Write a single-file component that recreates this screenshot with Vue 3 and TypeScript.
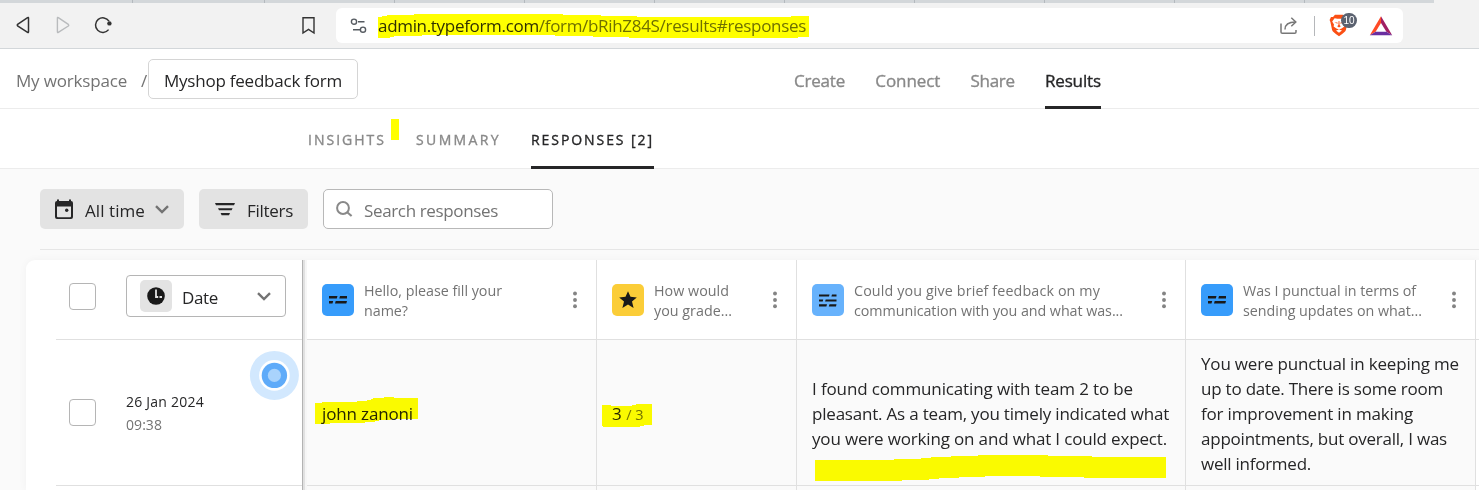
<script setup lang="ts">
import type { Directive } from 'vue'

interface Line {
  text: string
  width: number
}

interface Column {
  kind: 'short' | 'rating' | 'long'
  title: Line[]
  answer: Line[]
}

// Spreads the letters of a line over the given width.
const vFit: Directive<HTMLElement, number> = {
  mounted(el, { value }) {
    const count = el.textContent?.trim().length ?? 0
    if (count > 1) {
      const natural = el.getBoundingClientRect().width
      el.style.letterSpacing = `${(value - natural) / count}px`
    }
  },
}

const tabs = Array.from({ length: 11 }, (_, i) => i)

const columns: Column[] = [
  {
    kind: 'short',
    title: [
      { text: 'Hello, please fill your', width: 138 },
      { text: 'name?', width: 44 },
    ],
    answer: [{ text: 'john zanoni', width: 91 }],
  },
  {
    kind: 'rating',
    title: [
      { text: 'How would', width: 75 },
      { text: 'you grade...', width: 78 },
    ],
    answer: [],
  },
  {
    kind: 'long',
    title: [
      { text: 'Could you give brief feedback on my', width: 246 },
      { text: 'communication with you and what was...', width: 269 },
    ],
    answer: [
      { text: 'I found communicating with team 2 to be', width: 321 },
      { text: 'pleasant. As a team, you timely indicated what', width: 357 },
      { text: 'you were working on and what I could expect.', width: 355 },
    ],
  },
  {
    kind: 'short',
    title: [
      { text: 'Was I punctual in terms of', width: 173 },
      { text: 'sending updates on what...', width: 179 },
    ],
    answer: [
      { text: 'You were punctual in keeping me', width: 258 },
      { text: 'up to date. There is some room', width: 242 },
      { text: 'for improvement in making', width: 212 },
      { text: 'appointments, but overall, I was', width: 246 },
      { text: 'well informed.', width: 110 },
    ],
  },
]
</script>

<template>
  <div class="page">
    <div class="strip"><i v-for="t in tabs" :key="t"></i></div>

    <div class="toolbar">
      <svg class="ti" width="20" height="21" viewBox="0 0 20 21"><path d="M14.6 2.6 Q15.5 2 15.5 3.2 V16.8 Q15.5 18 14.6 17.4 L4.6 11 Q3.8 10.2 4.6 9.4 Z" fill="none" stroke="#333" stroke-width="1.5" /></svg>
      <svg class="ti" width="20" height="21" viewBox="0 0 20 21"><path d="M5.3 2.6 Q4.4 2 4.4 3.2 V16.8 Q4.4 18 5.3 17.4 L15.3 11 Q16.2 10.2 15.3 9.4 Z" fill="none" stroke="#b9bbbd" stroke-width="1.4" /></svg>
      <svg class="ti" width="20" height="21" viewBox="0 0 20 21"><path d="M15.6 14.6 A7.3 7.3 0 1 1 16 6.2" fill="none" stroke="#333" stroke-width="1.5" /><circle cx="16.4" cy="8.4" r="2.2" fill="#333" /></svg>
      <svg class="ti bookmark" width="20" height="21" viewBox="0 0 20 21"><path d="M5 2.7 H16 V18 L10.5 14.4 L5 18 Z" fill="none" stroke="#333" stroke-width="1.4" /></svg>
      <div class="address">
        <svg class="tune" width="18" height="18" viewBox="0 0 18 18"><g fill="none" stroke="#555a60" stroke-width="1.4"><circle cx="4" cy="4.7" r="2.6" /><path d="M8 4.7 H14.5 M3 12.7 H10" /><circle cx="13" cy="12.7" r="2.6" /></g></svg>
        <span v-fit="428" class="url"><b>admin.typeform.com</b>/form/bRihZ84S/results#responses</span>
        <svg class="share" width="20" height="20" viewBox="0 0 20 20"><g fill="none" stroke="#777" stroke-width="1.5"><path d="M2 7.5 V16 Q2 17.3 3.3 17.3 H15.7 Q17 17.3 17 16 V14" /><path d="M6 13.5 C6 8.5 9 6 16.5 6" /><path d="M12.3 1.8 L16.8 6 L12.3 10.2" /></g></svg>
        <i class="sep"></i>
        <div class="brave">
          <svg width="20" height="23" viewBox="0 0 20 23">
            <path d="M6 .8 H14 L16 3 L18 3 L19.4 6 L18.6 8 L16.9 16 Q16.4 18 10 22.2 Q3.6 18 3.1 16 L1.4 8 L.6 6 L2 3 L4 3 Z" fill="#fb4f14" />
            <path d="M5.6 4.2 L8.4 4.8 H11.6 L14.4 4.2 L16.8 7.6 L15 10.4 L15.4 12.6 L12.6 14.6 L10 15.4 L7.4 14.6 L4.6 12.6 L5 10.4 L3.2 7.6 Z M7 16.4 L10 15.6 L13 16.4 L10 18.8 Z" fill="#fff" />
            <path d="M5.4 8 L8.8 8.7 L8.3 9.7 Z M14.6 8 L11.2 8.7 L11.7 9.7 Z M9.6 7 H10.4 L10.6 11 L11.8 12.3 L10 13.4 L8.2 12.3 L9.4 11 Z" fill="#fb4f14" />
          </svg>
          <span class="count">10</span>
        </div>
        <svg class="bat" width="24" height="20" viewBox="0 0 24 20"><path d="M12 .3 L.8 19.2 L6.6 15.8 L12 7 Z" fill="#ff4a26" /><path d="M12 .3 L23.2 19.2 L17.4 15.8 L12 7 Z" fill="#a01f64" /><path d="M.8 19.2 H23.2 L17.4 15.8 H6.6 Z" fill="#6a2fa0" /></svg>
      </div>
    </div>

    <header class="head">
      <div class="workspace"><span v-fit="111">My workspace</span></div>
      <span class="slash">/</span>
      <div class="form-name"><span v-fit="178">Myshop feedback form</span></div>
      <nav class="nav">
        <a><span v-fit="51">Create</span></a>
        <a><span v-fit="65">Connect</span></a>
        <a><span v-fit="44">Share</span></a>
        <a class="on"><span v-fit="56">Results</span></a>
      </nav>
    </header>

    <nav class="sub">
      <a><span v-fit="78">INSIGHTS</span></a>
      <a><span v-fit="85">SUMMARY</span></a>
      <a class="on"><span v-fit="123">RESPONSES [2]</span></a>
    </nav>

    <main class="content">
      <div class="filters">
        <div class="btn time">
          <svg width="18" height="20" viewBox="0 0 18 20"><path fill-rule="evenodd" d="M2 .5 H4 V2 H14 V.5 H16 V2 Q18 2 18 4 V18 Q18 20 16 20 H2 Q0 20 0 18 V4 Q0 2 2 2 Z M2 7.5 V17.3 Q2 18.2 2.9 18.2 H15.1 Q16 18.2 16 17.3 V7.5 Z" fill="#262627" /><circle cx="11.7" cy="11.2" r="1.7" fill="#262627" /></svg>
          <div class="label"><span v-fit="60">All time</span></div>
          <svg width="14" height="9" viewBox="0 0 14 9"><path d="M1 1.2 L7 7 L13 1.2" fill="none" stroke="#737373" stroke-width="2.4" /></svg>
        </div>
        <div class="btn filter">
          <svg width="20" height="13" viewBox="0 0 20 13"><path d="M0 0 H20 L19 2.2 H1 Z M3 5.2 H17.6 L16.6 7.3 H4 Z M5.6 10 H15 L14 12.2 H6.6 Z" fill="#262627" /></svg>
          <div class="label"><span v-fit="46">Filters</span></div>
        </div>
        <div class="search">
          <svg width="17" height="17" viewBox="0 0 17 17"><circle cx="7" cy="7" r="5.9" fill="none" stroke="#898989" stroke-width="2" /><path d="M11.2 11.2 L15.6 15" stroke="#898989" stroke-width="2.1" /></svg>
          <div class="label"><span v-fit="134">Search responses</span></div>
        </div>
      </div>

      <div class="table">
        <div class="frozen">
          <div class="fh">
            <i class="box"></i>
            <div class="date">
              <i class="clock"><svg width="18" height="18" viewBox="0 0 18 18"><circle cx="9" cy="9" r="8.8" fill="#191919" /><path d="M9 2.5 V10 H11.2 M12.5 10 H15" fill="none" stroke="#e3e3e3" stroke-width="1.8" /></svg></i>
              <div class="date-label"><span v-fit="36">Date</span></div>
              <svg width="14" height="9" viewBox="0 0 14 9"><path d="M1 1.2 L7 7 L13 1.2" fill="none" stroke="#737373" stroke-width="2.4" /></svg>
            </div>
          </div>
          <div class="fr">
            <i class="box"></i>
            <div class="when">
              <div><span v-fit="78">26 Jan 2024</span></div>
              <div class="clocktime"><span v-fit="36">09:38</span></div>
            </div>
            <svg class="beacon" width="50" height="50" viewBox="0 0 50 50"><circle cx="25.4" cy="25.4" r="24.5" fill="#d2e8fe" /><circle cx="25.4" cy="25.4" r="15.3" fill="#fff" /><circle cx="25.4" cy="25.4" r="12.7" fill="#5fabf9" /><circle cx="25.4" cy="25.4" r="6.6" fill="#a9d3fc" /></svg>
          </div>
        </div>
        <div class="edge"></div>
        <div class="grid">
          <div v-for="(c, i) in columns" :key="'h' + i" class="th">
            <i class="kind" :class="c.kind">
              <svg v-if="c.kind === 'short'" width="18" height="8" viewBox="0 0 18 8"><path d="M0 0 H8.5 L7.8 2.6 H0 Z M11 0 H18 V2.6 H10.3 Z M0 5 H4.2 L3.5 7.6 H0 Z M6.7 5 H18 L17.3 7.6 H6 Z" fill="#191919" /></svg>
              <svg v-else-if="c.kind === 'long'" width="18" height="13" viewBox="0 0 18 13"><path d="M0 .5 H10.5 L10 2.6 H0 Z M13 .5 H17.5 V2.6 H12.4 Z M0 5.5 H4.2 L3.7 7.6 H0 Z M6.7 5.5 H17.5 V7.6 H6.1 Z M0 10.3 H8 L7.4 12.4 H0 Z M10.5 10.3 H17.5 L17 12.4 H9.8 Z" fill="#191919" /></svg>
              <svg v-else width="18" height="18" viewBox="0 0 18 18"><path d="M9 .2 L11.5 5.8 L17.8 6.4 L13 10.6 L14.6 17 L9 13.6 L3.4 17 L5 10.6 L.2 6.4 L6.5 5.8 Z" fill="#191919" /></svg>
            </i>
            <div class="title">
              <div v-for="l in c.title" :key="l.text"><span v-fit="l.width">{{ l.text }}</span></div>
            </div>
            <svg class="dots" width="4" height="18" viewBox="0 0 4 18"><g fill="#848484"><circle cx="2" cy="2.5" r="1.95" /><circle cx="2" cy="9" r="1.95" /><circle cx="2" cy="15.3" r="1.95" /></g></svg>
          </div>
          <div class="rest"></div>
          <div v-for="(c, i) in columns" :key="'a' + i" class="td">
            <div>
              <div v-for="l in c.answer" :key="l.text"><span v-fit="l.width">{{ l.text }}</span></div>
              <div v-if="c.kind === 'rating'" class="grade">3 <small>/ 3</small></div>
            </div>
          </div>
          <div class="rest"></div>
          <div v-for="(c, i) in columns" :key="'n' + i" class="next"></div>
        </div>
      </div>
    </main>

    <svg class="marker" width="1479" height="490" viewBox="0 0 1479 490">
      <g fill="#ff0" shape-rendering="crispEdges">
        <path d="M378 17 H382 V16 H387 V15 H414 V14 H563 V15 H601 V16 H637 V17 H791 V16 H809 V37 H798 V38 H629 V37 H593 V36 H555 V35 H422 V36 H394 V37 H390 V38 H378 Z" />
        <path d="M391 119 H399 V140 H391 Z" />
        <path d="M315 403 H322 V402 H357 V401 H367 V400 H371 V399 H373 V398 H384 V397 H394 V398 H418 V419 H391 V420 H379 V421 H375 V422 H365 V423 H330 V424 H315 Z" />
        <path d="M602 405 H611 V406 H632 V405 H636 V404 H652 V425 H644 V426 H640 V427 H603 V426 H602 Z" />
        <path d="M815 460 H894 V459 H921 V458 H931 V457 H951 V456 H978 V455 H1048 V456 H1092 V457 H1166 V478 H1084 V477 H1040 V476 H985 V477 H959 V478 H939 V479 H929 V480 H902 V481 H815 Z" />
      </g>
    </svg>
  </div>
</template>

<style>
body {
  margin: 0;
  overflow: hidden;
}
</style>

<style scoped>
.page {
  position: relative;
  width: 1479px;
  height: 490px;
  overflow: hidden;
  background: #fff;
  color: #262627;
  font-family: 'Open Sans', 'Noto Sans', sans-serif;
  font-size: 17px;
  line-height: 25px;
  white-space: nowrap;
}
.page * {
  box-sizing: border-box;
}
svg {
  display: block;
  flex: none;
}
i {
  display: block;
  flex: none;
}
.strip {
  display: flex;
  height: 3px;
  background: #f2f2f2;
}
.strip i {
  width: 130px;
  background: #d3d7da;
  border-right: 1px solid #b4b9be;
}
.strip i:first-child {
  width: 133px;
}
.strip i:nth-child(2) {
  width: 132px;
}
.strip i:last-child {
  width: 129px;
  border: 0;
}
.toolbar {
  display: flex;
  align-items: center;
  height: 46px;
  padding-left: 13px;
  background: #f2f2f2;
  border-bottom: 1px solid #d3d7da;
}
.ti {
  margin-right: 20px;
}
.bookmark {
  margin-left: 165px;
  margin-right: 18px;
}
.address {
  display: flex;
  align-items: center;
  width: 1067px;
  height: 35px;
  padding-left: 14px;
  border-radius: 6px;
  background: #fff;
}
.tune {
  margin-right: 10px;
}
.url {
  color: #6f7073;
  line-height: 24px;
}
.url b {
  font-weight: 400;
  color: #303134;
}
.share {
  margin-left: auto;
}
.sep {
  width: 1px;
  height: 20px;
  margin: 0 14px 0 15px;
  background: #b5b7ba;
}
.brave {
  position: relative;
  margin-right: 20px;
}
.count {
  position: absolute;
  left: 12px;
  top: -1px;
  width: 16px;
  height: 15px;
  border-radius: 8px;
  background: #5b6270;
  color: #fff;
  font-family: 'Liberation Sans', sans-serif;
  font-size: 10px;
  line-height: 15px;
  text-align: center;
}
.bat {
  margin-right: 10px;
}
.head {
  display: flex;
  height: 60px;
  padding-left: 16px;
  border-bottom: 1px solid #ececec;
}
.workspace {
  width: 125px;
  flex: none;
  padding-top: 19px;
  color: #737373;
}
.slash {
  width: 7px;
  padding-top: 19px;
  color: #737373;
}
.form-name {
  width: 210px;
  height: 40px;
  margin: 10px 436px 0 0;
  padding: 8px 0 0 15px;
  border: 1px solid #d5d5d5;
  border-radius: 5px;
  color: #262627;
}
.nav {
  display: flex;
}
.nav,
.sub {
  -webkit-text-stroke: 0.35px currentColor;
}
.nav a {
  height: 60px;
  margin-right: 30.3px;
  padding-top: 19px;
  color: #898989;
}
.nav a.on,
.sub a.on {
  color: #262627;
  border-bottom: 3px solid #262627;
}
.sub {
  display: flex;
  height: 60px;
  padding-left: 308px;
  border-bottom: 1px solid #ececec;
  font-size: 14px;
  color: #898989;
}
.sub a {
  height: 60px;
  margin-right: 30px;
  padding-top: 18px;
}
.content {
  height: 321px;
  padding-top: 20px;
  background: #fafafa;
}
.filters {
  display: flex;
  height: 61px;
  margin-left: 40px;
  border-bottom: 1px solid #e6e6e6;
}
.filters > div {
  display: flex;
  align-items: center;
  height: 40px;
  margin-right: 15px;
  border-radius: 5px;
}
.label {
  padding-top: 3px;
}
.btn {
  background: #e3e3e3;
}
.time {
  width: 144px;
  padding-left: 15px;
}
.time .label {
  width: 70px;
  margin-left: 12px;
}
.filter {
  width: 109px;
  padding-left: 16px;
}
.filter .label {
  margin-left: 12px;
}
.search {
  width: 230px;
  padding-left: 12px;
  border: 1px solid #b8b8b8;
  background: #fff;
  color: #737373;
}
.search .label {
  margin-left: 11px;
}
.table {
  display: flex;
  height: 230px;
  margin: 10px 0 0 26px;
  border-radius: 9px 0 0 0;
  background: #fff;
  box-shadow: 0 0 8px rgba(0, 0, 0, 0.04);
}
.frozen {
  width: 276px;
  padding-left: 30px;
}
.fh,
.fr {
  display: flex;
  align-items: center;
  padding-left: 13px;
  border-bottom: 1px solid #e0e0e0;
}
.fh {
  height: 80px;
  padding-bottom: 7px;
}
.fr {
  position: relative;
  height: 146px;
}
.box {
  width: 27px;
  height: 27px;
  margin-right: 30px;
  border: 1px solid #b5b5b5;
  border-radius: 4px;
  background: #fff;
}
.date {
  display: flex;
  align-items: center;
  width: 160px;
  height: 42px;
  padding-left: 13px;
  border: 1px solid #b5b5b5;
  border-radius: 4px;
}
.date-label {
  width: 75px;
  margin-left: 10px;
  padding-top: 3px;
}
.clock {
  display: grid;
  place-items: center;
  width: 32px;
  height: 32px;
  border-radius: 5px;
  background: #e3e3e3;
}
.when {
  padding-top: 1px;
  font-size: 14px;
  line-height: 23px;
}
.clocktime {
  color: #737373;
}
.beacon {
  position: absolute;
  left: 193px;
  top: 10px;
}
.edge {
  width: 5px;
  background: linear-gradient(to right, #b3b3b3 1px, #e1e1e1 1px, #e1e1e1 3px, #f6f6f6 3px);
}
.grid {
  display: grid;
  grid-template-columns: 290px 200px 389px 290px 3px;
  grid-template-rows: 80px 146px 4px;
}
.grid > div {
  border-right: 1px solid #e0e0e0;
  border-bottom: 1px solid #e0e0e0;
}
.grid > .rest {
  border-right: 0;
}
.th {
  display: flex;
  align-items: center;
  padding: 1px 19px 0 15px;
  font-size: 14.3px;
  line-height: 20px;
  color: #737373;
}
.title {
  flex: 1;
  margin-left: 10px;
  padding-top: 1px;
}
.kind {
  display: grid;
  place-items: center;
  width: 32px;
  height: 32px;
  border-radius: 5px;
}
.short {
  background: #379cfb;
}
.long {
  background: #67b2fc;
}
.rating {
  background: #fbcd38;
}
.td {
  display: flex;
  align-items: center;
  padding: 2px 0 0 15px;
  background: #fafafa;
}
.grade small {
  font-size: 14.5px;
  color: #737373;
}
.grid > .next {
  border-bottom: 0;
  background: #fafafa;
}
.marker {
  position: absolute;
  left: 0;
  top: 0;
  mix-blend-mode: multiply;
  pointer-events: none;
}
</style>
